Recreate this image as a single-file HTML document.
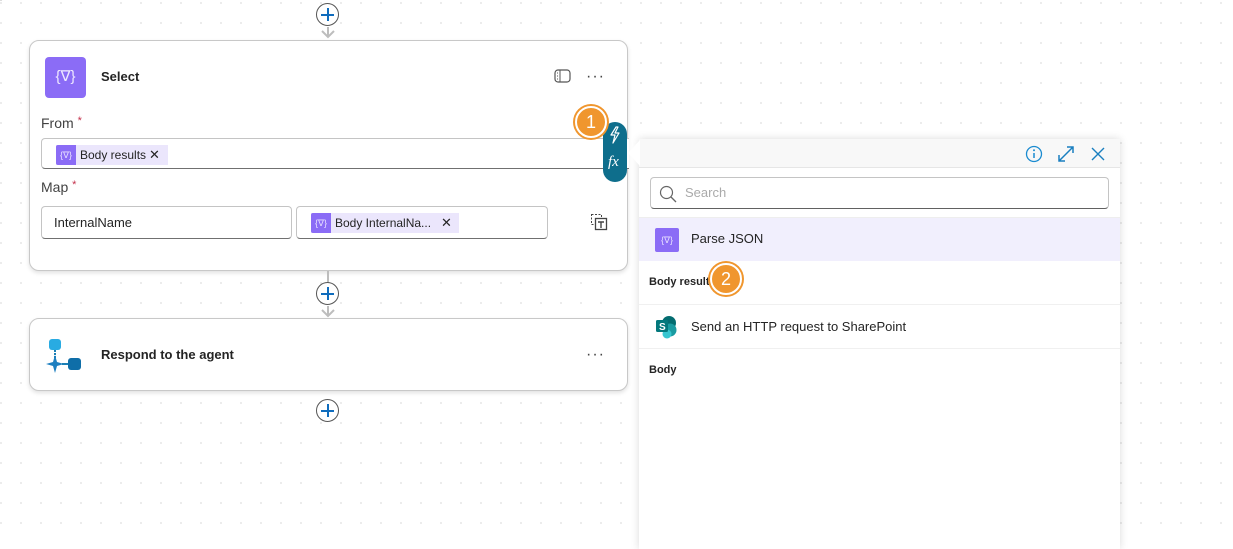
<!DOCTYPE html>
<html><head><meta charset="utf-8"><style>
*{box-sizing:border-box;margin:0;padding:0}
body{width:1233px;height:542px;overflow:hidden;position:relative;font-family:"Segoe UI","Liberation Sans",sans-serif;color:#242424;
background-color:#fff;background-image:linear-gradient(#dcdcdc,#dcdcdc);background-size:2px 1px;background-repeat:no-repeat}
.grid{position:absolute;left:0;top:0;width:1233px;height:542px;background-image:radial-gradient(ellipse 1.2px 0.7px,#d9d9d9 90%,transparent 100%);background-size:20px 20px;background-position:-9px -7px}
.abs{position:absolute}
.card{position:absolute;background:#fff;border:1px solid #c8c8c8;border-radius:10px;box-shadow:0 2px 4px rgba(0,0,0,.12)}
.plus{position:absolute;width:23px;height:23px;border:1px solid #555;border-radius:50%;background:#fff}
.plus:before,.plus:after{content:"";position:absolute;background:#0f6cbd;left:50%;top:50%}
.plus:before{width:13px;height:2px;margin:-1px 0 0 -6.5px}
.plus:after{width:2px;height:13px;margin:-6.5px 0 0 -1px}
.line{position:absolute;width:2px;background:#bdbdbd}
.input{position:absolute;border:1px solid #c4c4c4;border-bottom-color:#707070;border-radius:4px;background:#fff}
.tok{position:absolute;height:20px;background:#ebe6fc;font-size:12px;line-height:20px;padding-left:24px;color:#242424}
.tok i{position:absolute;left:0;top:0;width:20px;height:20px;background:#8b6cf6;border-radius:2px 0 0 2px;color:#e8e0ff;font-style:normal;font-size:9px;text-align:center}
.lbl{position:absolute;font-size:14px;color:#424242}
.lbl span{color:#c4314b;font-size:11px;vertical-align:top}
.badge{position:absolute;width:32px;height:32px;border-radius:50%;background:#f0962e;border:2px solid #fff;box-shadow:0 0 0 2px #f0962e;color:#fff;font-size:18px;text-align:center;line-height:28px}
</style></head><body>
<div class="grid"></div>

<div class="plus" style="left:316px;top:3px"></div>
<div class="line" style="left:327px;top:27px;height:10px"></div>
<svg class="abs" style="left:321px;top:30px" width="14" height="9"><path d="M1 1 L7 7 L13 1" stroke="#bdbdbd" stroke-width="2" fill="none"/></svg>

<div class="card" style="left:29px;top:40px;width:599px;height:231px">
  <div class="abs" style="left:15px;top:16px;width:41px;height:41px;background:#8b6cf6;border-radius:4px;color:#efe9ff;font-size:15px;text-align:center;line-height:40px">{&#8711;}</div>
  <div class="abs" style="left:71px;top:28px;font-size:13px;font-weight:bold">Select</div>
  <svg class="abs" style="left:524px;top:28px" width="17" height="14"><rect x="1" y="1" width="15" height="12" rx="3" fill="none" stroke="#555" stroke-width="1.2"/><line x1="6" y1="1" x2="6" y2="13" stroke="#555"/><path d="M3 4h1M3 7h1M3 10h1" stroke="#555"/></svg>
  <div class="abs" style="left:556px;top:27px;font-size:16px;letter-spacing:1px;color:#444">···</div>
  <div class="lbl" style="left:11px;top:74px">From <span>*</span></div>
  <div class="input" style="left:11px;top:97px;width:588px;height:31px;border-right:none;border-radius:4px 0 0 4px">
    <div class="tok" style="left:14px;top:6px;width:112px">Body results <span style="position:absolute;left:93px;font-size:13px">✕</span><i>{∇}</i></div>
  </div>
  <div class="lbl" style="left:11px;top:138px">Map <span>*</span></div>
  <div class="input" style="left:11px;top:165px;width:251px;height:33px"><div class="abs" style="left:12px;top:8px;font-size:13px">InternalName</div></div>
  <div class="input" style="left:266px;top:165px;width:252px;height:33px">
    <div class="tok" style="left:14px;top:6px;width:148px">Body InternalNa... <span style="position:absolute;left:130px;font-size:13px">✕</span><i>{∇}</i></div>
  </div>
  <svg class="abs" style="left:560px;top:172px" width="18" height="18"><rect x="1.5" y="1.5" width="10" height="10" fill="none" stroke="#444" stroke-dasharray="2 1.5"/><rect x="5.5" y="5.5" width="11" height="11" fill="#fff" stroke="#444" stroke-width="1.3"/><path d="M8 9h6M11 9v6" stroke="#444" stroke-width="1.4"/></svg>
</div>

<div class="line" style="left:327px;top:271px;height:12px"></div>
<div class="plus" style="left:316px;top:282px"></div>
<div class="line" style="left:327px;top:306px;height:10px"></div>
<svg class="abs" style="left:321px;top:309px" width="14" height="9"><path d="M1 1 L7 7 L13 1" stroke="#bdbdbd" stroke-width="2" fill="none"/></svg>

<div class="card" style="left:29px;top:318px;width:599px;height:73px">
  <svg class="abs" style="left:16px;top:18px" width="38" height="36"><rect x="3" y="2" width="12" height="11" rx="3" fill="#29abe2"/><path d="M9 13v8" stroke="#1b7fb5" stroke-width="2" stroke-dasharray="2 1"/><path d="M9 18 L11 25 L18 27 L11 29 L9 36 L7 29 L0 27 L7 25Z" fill="#1d7fc0"/><path d="M16 27h6" stroke="#1b7fb5" stroke-width="2"/><rect x="22" y="21" width="13" height="12" rx="3" fill="#0f6ea8"/></svg>
  <div class="abs" style="left:71px;top:28px;font-size:13px;font-weight:bold">Respond to the agent</div>
  <div class="abs" style="left:556px;top:27px;font-size:16px;letter-spacing:1px;color:#444">···</div>
</div>
<div class="plus" style="left:316px;top:399px"></div>

<!-- side toggle -->
<div class="abs" style="left:603px;top:122px;width:24px;height:60px;background:#0e6e8c;border-radius:12px"></div>
<svg class="abs" style="left:607px;top:126px" width="16" height="18"><path d="M9 1 L4 9 H8 L6 17 L12 7 H8 L11 1Z" fill="none" stroke="#fff" stroke-width="1.2" stroke-linejoin="round"/></svg>
<div class="abs" style="left:608px;top:154px;color:#fff;font-size:15px;font-style:italic;font-family:'Liberation Serif',serif">fx</div>
<div class="badge" style="left:575px;top:106px">1</div>

<!-- panel -->
<div class="abs" style="left:639px;top:139px;width:481px;height:410px;background:#fff;box-shadow:0 0 8px rgba(0,0,0,.15)">
  <div class="abs" style="left:0;top:0;width:481px;height:29px;background:#f8f8f8;border-bottom:1px solid #e6e6e6"></div>
  <svg class="abs" style="left:386px;top:6px" width="18" height="18"><circle cx="9" cy="9" r="7.5" fill="none" stroke="#1a8bd0" stroke-width="1.3"/><path d="M9 8v5" stroke="#1a8bd0" stroke-width="1.5"/><circle cx="9" cy="5.3" r="1" fill="#1a8bd0"/></svg>
  <svg class="abs" style="left:418px;top:6px" width="18" height="18"><path d="M2 16L16 2M10 2h6v6M2 10v6h6" stroke="#1a7fc0" stroke-width="1.5" fill="none"/></svg>
  <svg class="abs" style="left:451px;top:7px" width="16" height="16"><path d="M2 2L14 14M14 2L2 14" stroke="#1a7fc0" stroke-width="1.4"/></svg>
  <div class="abs" style="left:11px;top:38px;width:459px;height:32px;border:1px solid #c4c4c4;border-bottom-color:#616161;border-radius:4px">
    <svg class="abs" style="left:8px;top:7px" width="18" height="18"><circle cx="7.5" cy="7.5" r="6" fill="none" stroke="#666" stroke-width="1.2"/><path d="M12 12l5 5" stroke="#666" stroke-width="1.3"/></svg>
    <div class="abs" style="left:34px;top:7px;font-size:13px;color:#aaa">Search</div>
  </div>
  <div class="abs" style="left:0;top:78px;width:481px;height:44px;background:#f1effd;border-top:1px solid #eee"></div>
  <div class="abs" style="left:16px;top:89px;width:24px;height:24px;background:#8b6cf6;border-radius:2px;color:#e8e0ff;font-size:9px;text-align:center;line-height:24px">{∇}</div>
  <div class="abs" style="left:52px;top:92px;font-size:13px">Parse JSON</div>
  <div class="abs" style="left:10px;top:137px;font-size:11px;font-weight:bold">Body results</div>
  <div class="abs" style="left:0;top:165px;width:481px;height:1px;background:#f0f0f0"></div>
  <svg class="abs" style="left:16px;top:176px" width="24" height="24"><circle cx="14" cy="8" r="7" fill="#036c70"/><circle cx="15" cy="15" r="6.5" fill="#1a9ba1"/><circle cx="12" cy="19" r="4.5" fill="#37c6d0"/><rect x="1" y="5" width="12" height="12" rx="1.5" fill="#03787c"/><text x="4" y="15" font-size="10" font-weight="bold" fill="#fff" font-family="Liberation Sans">S</text></svg>
  <div class="abs" style="left:52px;top:180px;font-size:13px">Send an HTTP request to SharePoint</div>
  <div class="abs" style="left:0;top:209px;width:481px;height:1px;background:#f0f0f0"></div>
  <div class="abs" style="left:10px;top:225px;font-size:11px;font-weight:bold">Body</div>
</div>
<svg class="abs" style="left:627px;top:140px" width="14" height="30"><path d="M13 0 L1 13 L13 26Z" fill="#fff"/></svg>
<div class="badge" style="left:710px;top:263px">2</div>
</body></html>
